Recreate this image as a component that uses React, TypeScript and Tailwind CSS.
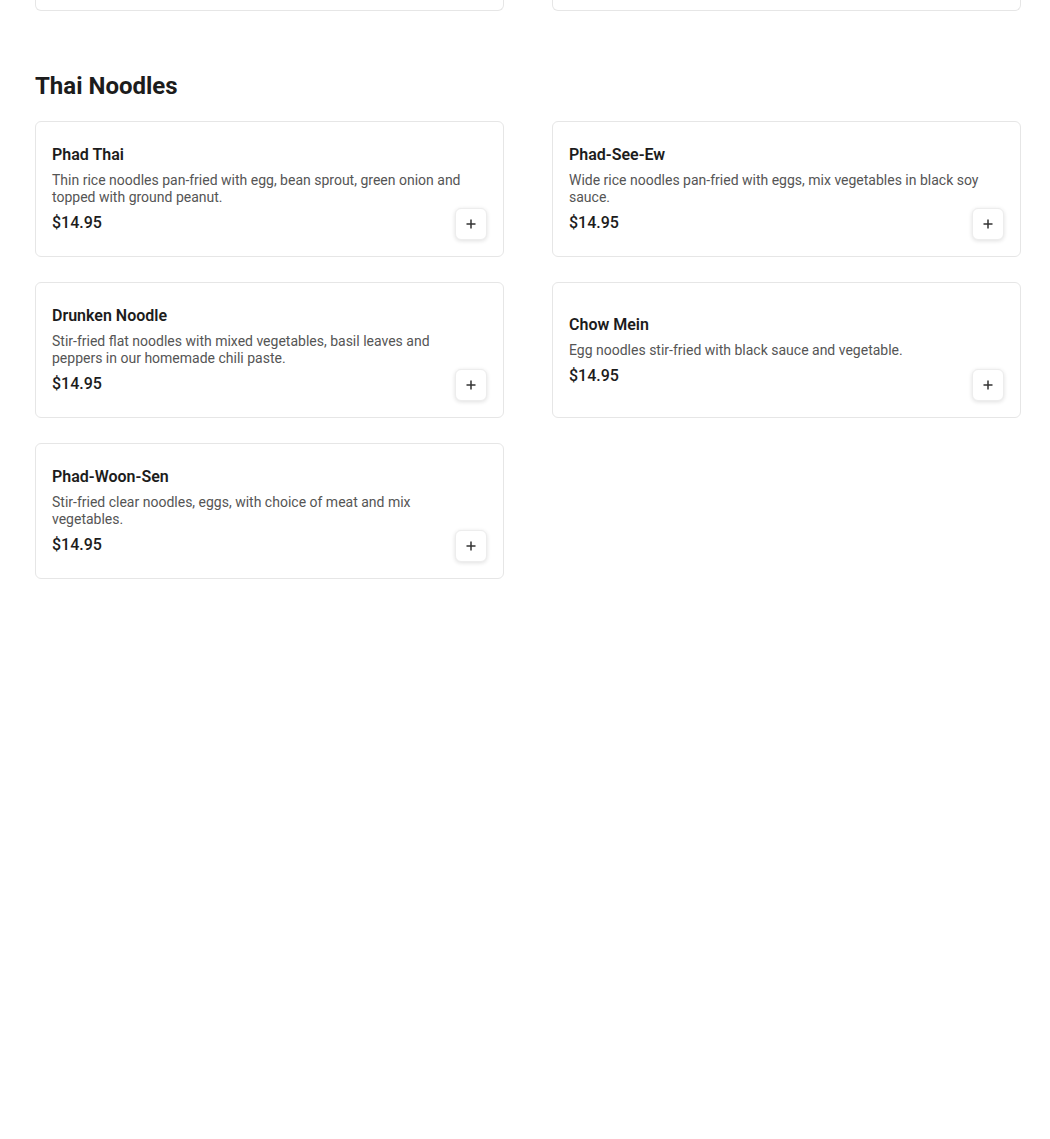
import React from "react";

type Item = { name: string; desc: string; price: string };

const items: Item[] = [
  { name: "Phad Thai", desc: "Thin rice noodles pan-fried with egg, bean sprout, green onion and topped with ground peanut.", price: "$14.95" },
  { name: "Phad-See-Ew", desc: "Wide rice noodles pan-fried with eggs, mix vegetables in black soy sauce.", price: "$14.95" },
  { name: "Drunken Noodle", desc: "Stir-fried flat noodles with mixed vegetables, basil leaves and peppers in our homemade chili paste.", price: "$14.95" },
  { name: "Chow Mein", desc: "Egg noodles stir-fried with black sauce and vegetable.", price: "$14.95" },
  { name: "Phad-Woon-Sen", desc: "Stir-fried clear noodles, eggs, with choice of meat and mix vegetables.", price: "$14.95" },
];

function PlusButton() {
  return (
    <button className="absolute bottom-4 right-4 flex h-8 w-8 items-center justify-center rounded-md border border-[#ededed] bg-white shadow-[0_1px_4px_rgba(0,0,0,0.13)]">
      <svg width="12" height="12" viewBox="0 0 12 12" fill="none">
        <path d="M6 1.5v9M1.5 6h9" stroke="#333" strokeWidth="1.5" />
      </svg>
    </button>
  );
}

function Card({ item }: { item: Item }) {
  return (
    <div className="relative flex min-h-[136px] items-center rounded-md border border-[#e6e6e6] bg-white px-4 py-5">
      <div className="flex flex-1 flex-col">
        <div className="text-[16px] font-semibold leading-6 text-[#1c1c1c]">{item.name}</div>
        <div className="mt-[5px] pr-[8px] text-[14px] leading-[17px] text-[#555555]">{item.desc}</div>
        <div className="mt-[5px] text-[16px] font-medium leading-6 text-[#1c1c1c]">{item.price}</div>
      </div>
      <PlusButton />
    </div>
  );
}

export default function App() {
  return (
    <div className="min-h-[1139px] bg-white pl-[35px] pr-[29px]" style={{ fontFamily: "Roboto, 'Liberation Sans', sans-serif" }}>
      <div className="grid grid-cols-2 gap-x-[48px]">
        <div className="h-[11px] rounded-b-md border-x border-b border-[#e6e6e6] bg-white" />
        <div className="h-[11px] rounded-b-md border-x border-b border-[#e6e6e6] bg-white" />
      </div>
      <h2 className="mt-[59px] text-[24px] font-bold leading-8 text-[#1c1c1c]">Thai Noodles</h2>
      <div className="mt-[19px] grid grid-cols-2 gap-x-[48px] gap-y-[25px]">
        {items.map((it) => (
          <Card key={it.name} item={it} />
        ))}
      </div>
    </div>
  );
}
